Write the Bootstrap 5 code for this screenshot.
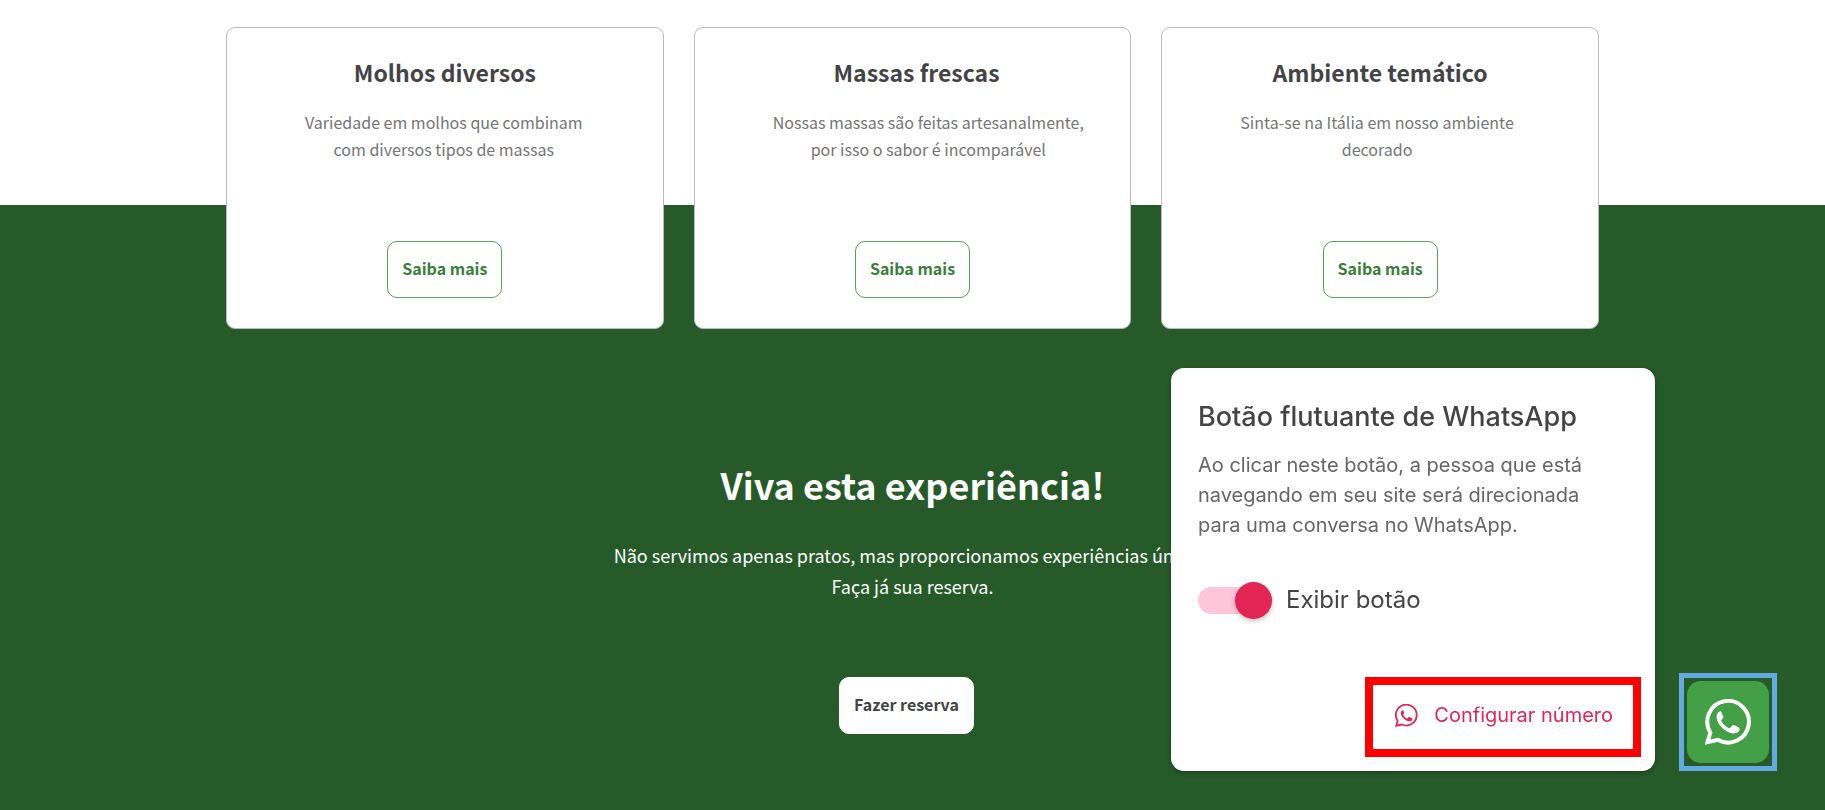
<!DOCTYPE html>
<html lang="pt-BR">
<head>
<meta charset="utf-8">
<meta name="viewport" content="width=device-width, initial-scale=1">
<title>Restaurante</title>
<link href="https://cdn.jsdelivr.net/npm/bootstrap@5.3.0/dist/css/bootstrap.min.css" rel="stylesheet">
<style>
  :root {
    --forest: #265b29;
    --leaf: #43a047;
    --moss: #388039;
    --ink: #444446;
    --soft: #757575;
    --pink: #e22555;
  }
  body {
    font-family: "Noto Sans CJK SC", sans-serif;
    color: var(--ink);
    background: #fff;
  }
  .features {
    width: 100%;
    max-width: 1373px;
    padding-top: 27px;
    margin-bottom: -124px;
    z-index: 1;
  }
  .features-grid {
    display: grid;
    grid-template-columns: repeat(3, 1fr);
    gap: 30px;
  }
  .feature {
    border: 1px solid #b9bac4;
    border-radius: 9px;
    padding: 28px 16px 30px;
    min-height: 302px;
  }
  .feature h2 { font-size: 23px; line-height: 32px; font-weight: 700; }
  .feature p {
    font-size: 16px;
    line-height: 27px;
    width: fit-content;
    margin: 21px 0 0 62px;
    color: var(--soft);
  }
  .site-btn {
    height: 57px;
    padding: 0 14px 3px;
    font-size: 16px;
    font-weight: 700;
    border-radius: 10px;
  }
  .btn-more, .btn-more:hover { color: var(--moss); border-color: #58a05a; background: #fff; }
  .btn-book, .btn-book:hover { color: var(--ink); border-color: #fff; background: #fff; }
  .hero {
    background: var(--forest);
    color: #fff;
    padding: 251px 16px 76px;
  }
  .hero h1 { font-size: 36px; line-height: 56px; font-weight: 700; }
  .hero p { font-size: 18px; line-height: 31px; margin: 28px 0 75px; }
  .hero .btn-book { margin-right: 12px; }

  .floating {
    right: 48px;
    bottom: 39px;
    gap: 24px;
    z-index: 10;
    font-family: Inter, sans-serif;
  }
  .panel {
    width: 484px;
    min-height: 403px;
    padding: 32px 14px 14px 27px;
    border-radius: 13px;
    background: #fff;
    box-shadow: 0 2px 5px rgba(0, 0, 0, .3);
  }
  .panel h2 { font-size: 27px; line-height: 34px; font-weight: 500; }
  .panel p { font-size: 20px; line-height: 30px; margin: 16px 0 41px; color: #666668; }
  .toggle { gap: 14px; min-height: 38px; }
  .toggle label { font-size: 24px; line-height: 38px; }
  .toggle input {
    appearance: none;
    width: 74px;
    height: 27px;
    margin: 0;
    border-radius: 14px;
    background: #ffc6d9;
    display: flex;
    align-items: center;
    justify-content: flex-end;
  }
  .toggle input::before {
    content: "";
    flex: none;
    width: 37px;
    height: 37px;
    border-radius: 50%;
    background: var(--pink);
    box-shadow: 0 2px 5px rgba(0, 0, 0, .25);
  }
  .btn-number, .btn-number:hover {
    height: 80px;
    border: 8px solid #f00;
    border-radius: 0;
    padding: 0 20px 4px 22px;
    gap: 16px;
    font-size: 20px;
    color: var(--pink);
    background: #fff;
  }
  .whats-frame {
    padding: 3px;
    border: 5px solid #62abe1;
  }
  .btn-whats, .btn-whats:hover {
    width: 82px;
    height: 82px;
    border-radius: 14px;
    color: #fff;
    background: var(--leaf);
  }
</style>
</head>
<body class="d-flex flex-column min-vh-100">

<section class="features position-relative mx-auto">
  <div class="features-grid">
    <article class="feature bg-white d-flex flex-column">
      <h2 class="text-center mb-0">Molhos diversos</h2>
      <p class="text-center">Variedade em molhos que combinam<br>com diversos tipos de massas</p>
      <button type="button" class="btn site-btn btn-more mt-auto mx-auto">Saiba mais</button>
    </article>
    <article class="feature bg-white d-flex flex-column">
      <h2 class="text-center mb-0 ps-2">Massas frescas</h2>
      <p class="text-center">Nossas massas são feitas artesanalmente,<br>por isso o sabor é incomparável</p>
      <button type="button" class="btn site-btn btn-more mt-auto mx-auto">Saiba mais</button>
    </article>
    <article class="feature bg-white d-flex flex-column">
      <h2 class="text-center mb-0">Ambiente temático</h2>
      <p class="text-center">Sinta-se na Itália em nosso ambiente<br>decorado</p>
      <button type="button" class="btn site-btn btn-more mt-auto mx-auto">Saiba mais</button>
    </article>
  </div>
</section>

<section class="hero text-center flex-grow-1">
  <h1 class="mb-0">Viva esta experiência!</h1>
  <p>Não servimos apenas pratos, mas proporcionamos experiências únicas.<br>Faça já sua reserva.</p>
  <button type="button" class="btn site-btn btn-book">Fazer reserva</button>
</section>

<aside class="floating position-fixed d-flex align-items-end">
  <div class="panel d-flex flex-column">
    <h2 class="mb-0">Botão flutuante de WhatsApp</h2>
    <p>Ao clicar neste botão, a pessoa que está<br>navegando em seu site será direcionada<br>para uma conversa no WhatsApp.</p>
    <div class="toggle d-flex align-items-center">
      <input type="checkbox" role="switch" id="show-button" checked>
      <label for="show-button">Exibir botão</label>
    </div>
    <button type="button" class="btn btn-number d-flex align-items-center mt-auto ms-auto">
      <svg width="23" height="23" viewBox="0 0 46 46" aria-hidden="true">
        <path d="M2.5 43.500 5.200 33.600A20.800 20.800 0 1 1 13.800 41Z" fill="none" stroke="currentColor" stroke-width="3.600"/>
        <path d="M15.500 12.300c-1.500 0-4.200 2.200-3.900 6.300.6 7.600 9.600 15.600 16.700 15.900 3.600.1 6.500-2 6.300-4.700 0-1-.5-1.300-1.200-1.600l-4.500-2.100c-.8-.3-1.300-.1-1.900.6l-1.500 1.900c-.5.600-1 .6-1.700.300-3.500-1.400-6-4.200-7.300-6.700-.4-.7-.1-1.100.3-1.600l1.300-1.700c.3-.5.4-.9.100-1.500l-1.800-4.200c-.3-.7-.6-.9-.9-.9Z" fill="currentColor"/>
      </svg>
      <span>Configurar número</span>
    </button>
  </div>
  <div class="whats-frame">
    <button type="button" class="btn btn-whats d-flex align-items-center justify-content-center p-0" aria-label="Abrir conversa no WhatsApp">
      <svg width="46" height="46" viewBox="0 0 46 46" aria-hidden="true">
        <path d="M2.500 43.200 5.300 33.500A20.800 20.800 0 1 1 12.800 40.800Z" fill="none" stroke="currentColor" stroke-width="4"/>
        <path d="M15.500 12.300c-1.500 0-4.200 2.200-3.900 6.300.6 7.600 9.600 15.600 16.700 15.900 3.600.1 6.500-2 6.300-4.700 0-1-.5-1.300-1.200-1.600l-4.500-2.100c-.8-.3-1.300-.1-1.900.6l-1.500 1.900c-.5.600-1 .6-1.700.300-3.500-1.400-6-4.200-7.300-6.700-.4-.7-.1-1.100.3-1.600l1.300-1.700c.3-.5.4-.9.100-1.500l-1.800-4.200c-.3-.7-.6-.9-.9-.9Z" fill="currentColor"/>
      </svg>
    </button>
  </div>
</aside>

<script src="https://cdn.jsdelivr.net/npm/bootstrap@5.3.0/dist/js/bootstrap.bundle.min.js"></script>
</body>
</html>
